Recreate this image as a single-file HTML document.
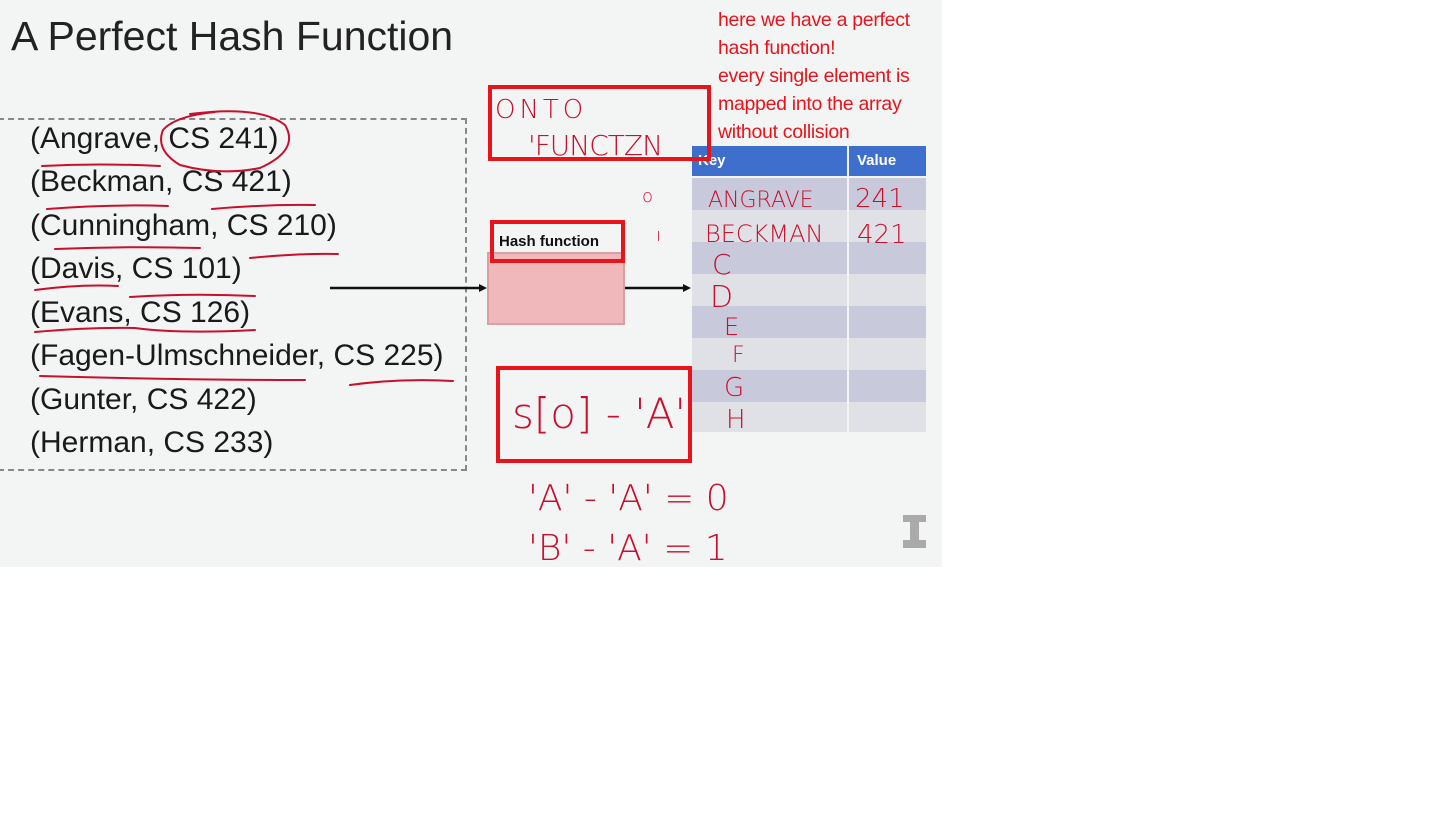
<!DOCTYPE html>
<html><head><meta charset="utf-8"><style>
body{margin:0;width:1456px;height:815px;background:#fff;position:relative;overflow:hidden;font-family:"Liberation Sans",sans-serif}
#slide{position:absolute;left:0;top:0;width:942px;height:567px;background:#f3f4f4}
.t{position:absolute;white-space:nowrap}
.list div{position:absolute;left:30px;font-size:30px;color:#1a1a1a;white-space:nowrap}
.ann{position:absolute;left:718px;top:6px;color:#e8141c;font-size:19.5px;line-height:28px;letter-spacing:-0.3px}
.box{position:absolute;border:4px solid #e8141c;box-sizing:border-box}
</style></head><body>
<div id="slide">
<div class="t" style="left:11px;top:13px;font-size:41px;color:#222">A Perfect Hash Function</div>
<div style="position:absolute;left:-2px;top:118px;width:469px;height:353px;border:2px dashed #888;box-sizing:border-box"></div>
<div class="list">
<div style="top:122px">(Angrave, CS 241)</div>
<div style="top:165px">(Beckman, CS 421)</div>
<div style="top:209px">(Cunningham, CS 210)</div>
<div style="top:252px">(Davis, CS 101)</div>
<div style="top:296px">(Evans, CS 126)</div>
<div style="top:339px">(Fagen-Ulmschneider, CS 225)</div>
<div style="top:383px">(Gunter, CS 422)</div>
<div style="top:426px">(Herman, CS 233)</div>
</div>
<div style="position:absolute;left:487px;top:252px;width:138px;height:73px;background:#f0b8bb;border:2px solid #d8a0a0;box-sizing:border-box"></div>
<div class="t" style="left:499px;top:233px;font-size:15px;font-weight:bold;color:#111">Hash function</div>
<div style="position:absolute;left:692px;top:146px;width:234px;height:30px;background:#3f6fcc"></div>
<div class="t" style="left:698px;top:152px;color:#fff;font-weight:bold;font-size:15px">Key</div>
<div class="t" style="left:857px;top:152px;color:#fff;font-weight:bold;font-size:15px">Value</div>
<div style="position:absolute;left:692px;top:178px;width:234px;height:254px;background:repeating-linear-gradient(#c8cadb 0 32px,#e0e1e6 32px 64px)"></div>
<div style="position:absolute;left:847px;top:146px;width:2px;height:286px;background:#f3f4f4"></div>
<svg style="position:absolute;left:0;top:0" width="942" height="567">
<g stroke="#111" stroke-width="2.5"><line x1="330" y1="288" x2="481" y2="288"/><line x1="625" y1="288" x2="684" y2="288"/></g>
<polygon points="487,288 479,284 479,292" fill="#111"/><polygon points="691,288 683,284 683,292" fill="#111"/>
<g fill="none" stroke="#c8102e" stroke-width="2" stroke-linecap="round">
<path d="M42 166 Q100 163 160 166"/>
<path d="M190 114 Q260 105 285 125 Q300 150 260 168 Q220 176 180 165 Q155 150 163 130 Q175 116 215 112"/>
<path d="M47 209 Q110 204 168 206"/><path d="M212 209 Q270 204 315 205"/>
<path d="M55 249 Q130 246 200 248"/><path d="M250 258 Q300 253 338 254"/>
<path d="M35 290 Q80 284 118 286"/><path d="M130 297 Q190 293 255 296"/>
<path d="M35 332 Q90 327 135 328 Q180 334 255 330"/>
<path d="M40 376 Q180 380 305 380"/><path d="M350 385 Q400 378 453 381"/>
</g>
<g fill="#c8102e" font-family="DejaVu Sans" font-weight="200">
<text x="495" y="118" font-size="26" letter-spacing="4">ONTO</text>
<text x="528" y="155" font-size="28" letter-spacing="-1">'FUNCTZN</text>
<text x="642" y="202" font-size="18">o</text>
<text x="656" y="241" font-size="18">ı</text>
<text x="708" y="207" font-size="22">ANGRAVE</text>
<text x="855" y="207" font-size="26">241</text>
<text x="705" y="242" font-size="24">BECKMAN</text>
<text x="857" y="243" font-size="26">421</text>
<text x="712" y="274" font-size="28">C</text>
<text x="710" y="307" font-size="30">D</text>
<text x="724" y="335" font-size="24">E</text>
<text x="732" y="362" font-size="22">F</text>
<text x="724" y="396" font-size="26">G</text>
<text x="726" y="428" font-size="26">H</text>
<text x="512" y="428" font-size="42">s[o] - 'A'</text>
<text x="528" y="510" font-size="36">'A' - 'A'  = 0</text>
<text x="528" y="560" font-size="36">'B' - 'A' = 1</text>
</g>
<path d="M903 515h23v7h-7v18h7v8h-23v-8h7v-18h-7z" fill="#aaa"/>
</svg>
<div class="box" style="left:488px;top:85px;width:223px;height:76px"></div>
<div class="box" style="left:490px;top:220px;width:135px;height:43px"></div>
<div class="box" style="left:496px;top:366px;width:196px;height:97px"></div>
</div>
<div class="ann">here we have a perfect<br>hash function!<br>every single element is<br>mapped into the array<br>without collision</div>
</body></html>
